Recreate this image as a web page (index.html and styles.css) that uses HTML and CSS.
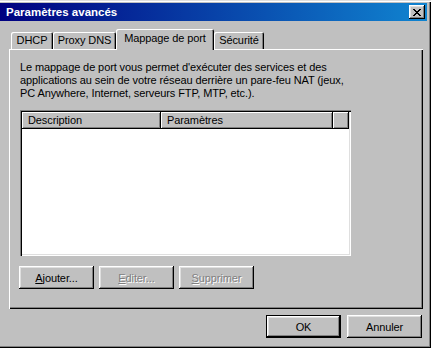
FILE: index.html
```html
<!DOCTYPE html>
<html lang="fr">

<head>
    <meta charset="UTF-8">
    <title>Paramètres avancés</title>
    <link rel="stylesheet" href="styles.css">
</head>

<body>

    <div class="window">
        <div class="titlebar">
            <span class="title">Paramètres avancés</span>
            <button class="close-btn" aria-label="Fermer">
                <svg width="8" height="7" viewBox="0 0 8 7" shape-rendering="crispEdges">
                    <path d="M0 0h2v1h-2zM6 0h2v1h-2zM1 1h2v1h-2zM5 1h2v1h-2zM2 2h4v1h-4zM3 3h2v1h-2zM2 4h4v1h-4zM1 5h2v1h-2zM5 5h2v1h-2zM0 6h2v1h-2zM6 6h2v1h-2z" fill="#000"/>
                </svg>
            </button>
        </div>

        <div class="tabs">
            <div class="tab tab-dhcp">DHCP</div>
            <div class="tab tab-proxy">Proxy DNS</div>
            <div class="tab tab-active">Mappage de port</div>
            <div class="tab tab-secu">Sécurité</div>
        </div>

        <div class="panel">
            <p class="intro">
                Le mappage de port vous permet d'exécuter des services et des<br>
                applications au sein de votre réseau derrière un pare-feu NAT (jeux,<br>
                PC Anywhere, Internet, serveurs FTP, MTP, etc.).
            </p>

            <div class="listview">
                <div class="list-header">
                    <div class="col col-desc">Description</div>
                    <div class="col col-param">Paramètres</div>
                    <div class="col col-rest"></div>
                </div>
            </div>

            <div class="panel-buttons">
                <button class="btn"><u>A</u>jouter...</button>
                <button class="btn" disabled><u>E</u>diter...</button>
                <button class="btn" disabled><u>S</u>upprimer</button>
            </div>
        </div>

        <div class="footer">
            <button class="btn btn-default">OK</button>
            <button class="btn">Annuler</button>
        </div>
    </div>

</body>

</html>
```

FILE: styles.css
```css
* {
    margin: 0;
    padding: 0;
    box-sizing: border-box;
}

body {
    margin: 0;
    width: 431px;
    height: 348px;
    overflow: hidden;
    font-family: 'Liberation Sans', Arial, sans-serif;
    font-size: 11px;
    letter-spacing: -0.1px;
    color: #000;
    background: #c0c0c0;
}

/* Window frame */
.window {
    width: 431px;
    height: 348px;
    padding: 3px 4px 0 0;
    background: #c0c0c0;
    box-shadow: inset 0 1px #dfdfdf, inset 0 2px #fff,
        inset -1px -1px #000, inset -2px -2px #808080;
}

.titlebar {
    height: 18px;
    display: flex;
    align-items: center;
    justify-content: space-between;
    padding: 0 2px 0 6px;
    background: linear-gradient(90deg, #000080, #1084d0);
}

.title {
    color: #fff;
    font-weight: bold;
    font-size: 11.5px;
    letter-spacing: 0;
}

.close-btn {
    width: 16px;
    height: 14px;
    border: none;
    background: #c0c0c0;
    display: flex;
    align-items: center;
    justify-content: center;
    padding-top: 1px;
    box-shadow: inset -1px -1px #000, inset 1px 1px #fff,
        inset -2px -2px #808080, inset 2px 2px #dfdfdf;
}

/* Tabs */
.tabs {
    display: flex;
    align-items: flex-end;
    height: 20px;
    margin-top: 8px;
    padding-left: 11px;
}

.tab {
    height: 17px;
    padding-top: 2px;
    text-align: center;
    background: #c0c0c0;
    border-radius: 2px 2px 0 0;
    box-shadow: inset 1px 1px #fff, inset -1px 0 #000, inset -2px 0 #808080;
}

.tab-dhcp {
    width: 42px;
}

.tab-proxy {
    width: 63px;
}

.tab-active {
    width: 98px;
    height: 21px;
    margin-bottom: -1px;
    padding-top: 3px;
    position: relative;
    z-index: 1;
}

.tab-secu {
    width: 50px;
}

/* Tab page */
.panel {
    width: 414px;
    height: 260px;
    margin-left: 9px;
    padding: 12px 11px 0;
    background: #c0c0c0;
    box-shadow: inset 1px 1px #fff, inset -1px -1px #000, inset -2px -2px #808080;
}

.intro {
    line-height: 13px;
    white-space: nowrap;
}

.listview {
    width: 331px;
    height: 146px;
    margin-top: 10px;
    padding: 2px;
    background: #fff;
    box-shadow: inset 1px 1px #808080, inset 2px 2px #000,
        inset -1px -1px #fff, inset -2px -2px #dfdfdf;
}

.list-header {
    display: flex;
    height: 17px;
}

.col {
    height: 17px;
    line-height: 16px;
    padding-left: 6px;
    background: #c0c0c0;
    box-shadow: inset -1px -1px #000, inset 1px 1px #fff,
        inset -2px -2px #808080;
}

.col-desc {
    width: 139px;
}

.col-param {
    width: 172px;
}

.col-rest {
    flex: 1;
}

.panel-buttons {
    display: flex;
    gap: 5px;
    margin-top: 10px;
    margin-left: -1px;
}

/* Push buttons */
.btn {
    width: 75px;
    height: 23px;
    border: none;
    background: #c0c0c0;
    font-family: 'Liberation Sans', Arial, sans-serif;
    font-size: 11px;
    letter-spacing: -0.1px;
    color: #000;
    box-shadow: inset -1px -1px #000, inset 1px 1px #fff,
        inset -2px -2px #808080, inset 2px 2px #dfdfdf;
}

.btn:disabled {
    color: #808080;
    text-shadow: 1px 1px #fff;
}

.btn-default {
    box-shadow: inset 0 0 0 1px #000, inset -2px -2px #000, inset 2px 2px #fff,
        inset -3px -3px #808080, inset 3px 3px #dfdfdf;
}

.footer {
    display: flex;
    justify-content: flex-end;
    gap: 6px;
    margin-top: 6px;
    padding-right: 5px;
}
```
